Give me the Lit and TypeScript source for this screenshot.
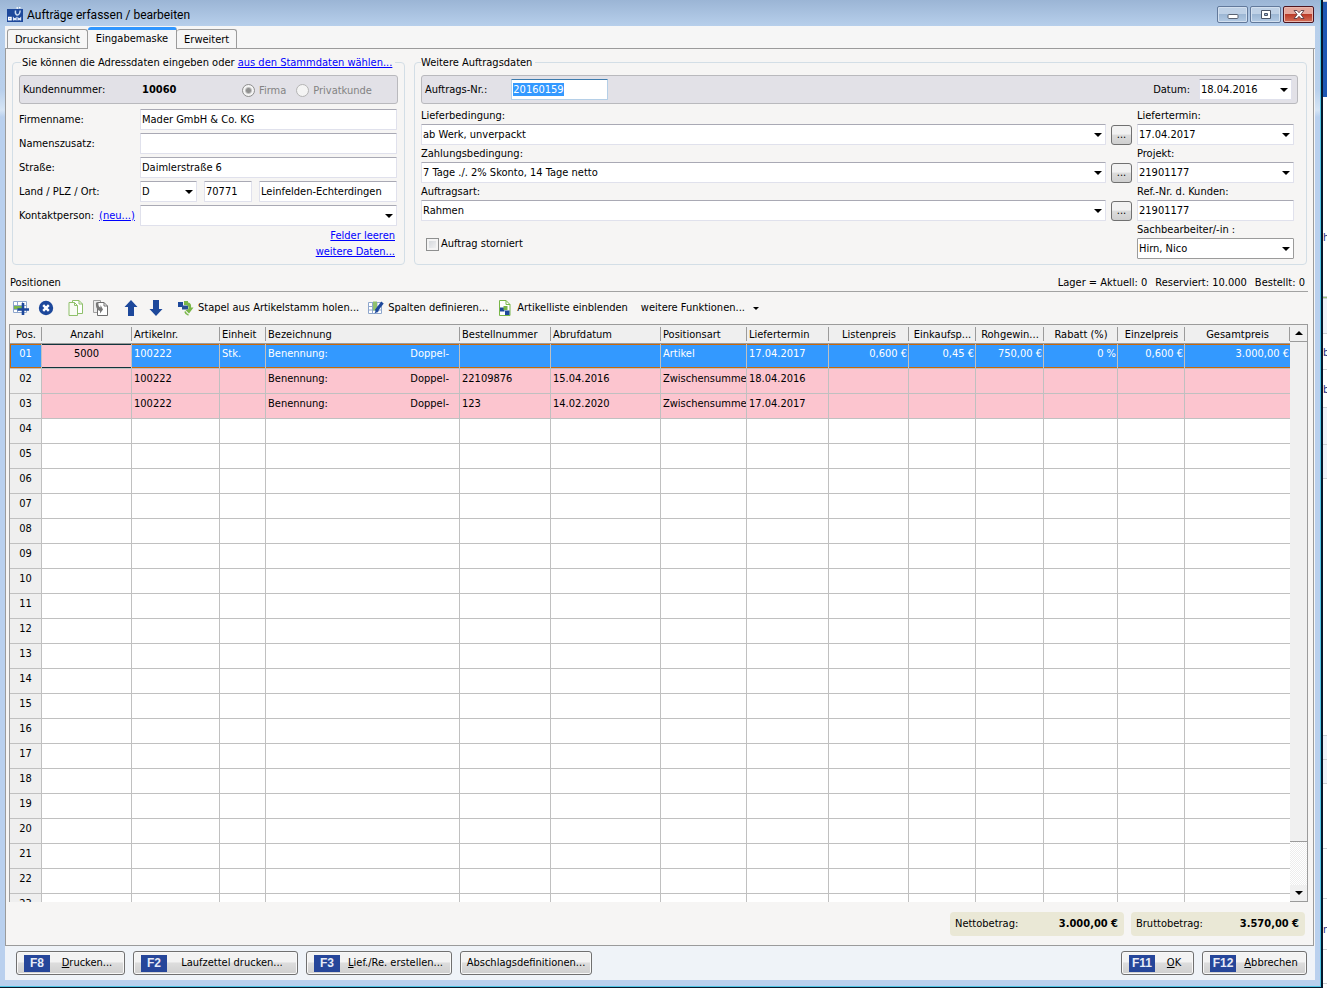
import { LitElement, html, css, svg, nothing, TemplateResult } from "lit";
import { customElement } from "lit/decorators.js";
import { classMap } from "lit/directives/class-map.js";
import { styleMap } from "lit/directives/style-map.js";

interface Column {
  title: string;
  width: number;
  align?: "center" | "right";
}

const COLUMNS: Column[] = [
  { title: "Pos.", width: 32, align: "center" },
  { title: "Anzahl", width: 90, align: "center" },
  { title: "Artikelnr.", width: 88 },
  { title: "Einheit", width: 46 },
  { title: "Bezeichnung", width: 194 },
  { title: "Bestellnummer", width: 91 },
  { title: "Abrufdatum", width: 110 },
  { title: "Positionsart", width: 86 },
  { title: "Liefertermin", width: 82 },
  { title: "Listenpreis", width: 80, align: "right" },
  { title: "Einkaufsp...", width: 67, align: "right" },
  { title: "Rohgewin...", width: 68, align: "right" },
  { title: "Rabatt (%)", width: 74, align: "right" },
  { title: "Einzelpreis", width: 67, align: "right" },
  { title: "Gesamtpreis", width: 106, align: "right" },
];

const ROWS: string[][] = [
  ["5000", "100222", "Stk.", "Benennung:|Doppel-", "", "", "Artikel", "17.04.2017", "0,600 €", "0,45 €", "750,00 €", "0 %", "0,600 €", "3.000,00 €"],
  ["", "100222", "", "Benennung:|Doppel-", "22109876", "15.04.2016", "Zwischensumme", "18.04.2016", "", "", "", "", "", ""],
  ["", "100222", "", "Benennung:|Doppel-", "123", "14.02.2020", "Zwischensumme", "17.04.2017", "", "", "", "", "", ""],
];

const ROW_COUNT = 23;

/* Slices of the application window that lies behind the dialog. */
const BEHIND: { height: number; tone: string; text?: string }[] = [
  { height: 2, tone: "pale" },
  { height: 95, tone: "blue" },
  { height: 134, tone: "white clear" },
  { height: 66, tone: "white", text: "h" },
  { height: 2, tone: "green" },
  { height: 35, tone: "pale" },
  { height: 12, tone: "white clear" },
  { height: 24, tone: "white", text: "b" },
  { height: 13, tone: "white clear" },
  { height: 25, tone: "white", text: "b" },
  { height: 37, tone: "pale" },
  { height: 34, tone: "pale" },
  { height: 257, tone: "white" },
  { height: 24, tone: "pale" },
  { height: 24, tone: "pale" },
  { height: 65, tone: "white" },
  { height: 50, tone: "white" },
  { height: 24, tone: "white clear" },
  { height: 27, tone: "white", text: "n" },
  { height: 34, tone: "white" },
];

const triangle = html`<svg class="triangle" width="8" height="4" viewBox="0 0 8 4" aria-hidden="true"><path d="M0 0h8L4 4z" fill="#000" /></svg>`;

const icon = (body: unknown, size = 16) =>
  html`<svg width=${size} height=${size} viewBox="0 0 16 16" aria-hidden="true">${body}</svg>`;

const appIcon = icon(svg`
  <rect y="2" width="16" height="13" fill="#1d489b" />
  <path d="M1.700 10.500h2.300v2.300h-2.300z" fill="none" stroke="#fff" stroke-width="1.500" />
  <path d="M6.500 13.500v-2.500l1.300 1.500 1.300-1.500v2.500M11 13.500v-2.500l1.300 1.500 1.300-1.500v2.500" fill="none" stroke="#dfe8f7" stroke-width="1.200" />
  <path d="M8.500 3.500c-.500 3 .500 4.500 2 4.500s2.300-1.500 2.700-4.500" fill="none" stroke="#cbdcf2" stroke-width="1.500" />
  <path d="M9.500 1h1.500M12 0.500h1.500" stroke="#fff" stroke-width="1.500" />`);

const addRowIcon = icon(svg`
  <path d="M.5 1.500h13v11H.5zM.5 5.500h13M.5 9.500h13M4.500 1.500v11M9.500 1.500v11" fill="#fff" stroke="#8ea6cc" />
  <path d="M1 6h8v3H1z" fill="#79b648" />
  <path d="M10 3v12M4.500 9.500h11.500" stroke="#1d489b" stroke-width="2.600" />`);
const deleteIcon = icon(svg`
  <circle cx="8" cy="8" r="7.200" fill="#1d489b" />
  <path d="M5.200 5.200l5.600 5.600M10.800 5.200l-5.600 5.600" stroke="#fff" stroke-width="2.400" />`);
const copyIcon = icon(svg`
  <path d="M4.500.5h6.500l3.500 3.500v9.500H4.500z" fill="#fff" stroke="#8fc06b" />
  <path d="M11 .5v3.500h3.500" fill="none" stroke="#8fc06b" />
  <path d="M1 2.500h5.500l3 3v10H1z" fill="#f8fbf5" stroke="#8fc06b" />
  <path d="M6.500 2.500v3h3" fill="none" stroke="#8fc06b" />`);
const pasteIcon = icon(svg`
  <path d="M.5.5h7v12h-7z" fill="#ececec" stroke="#a0a0a0" />
  <path d="M4.500 2.500h6.500l3.500 3.500v9.500h-10z" fill="#fff" stroke="#6e6e6e" />
  <path d="M11 2.500v3.500h3.500" fill="none" stroke="#6e6e6e" />
  <path d="M3 2.500h2.500c-.500 3 .500 4.500 2 5V5l2.500 4.500-3 4v-2.500C4 10 2.500 7 3 2.500z" fill="#777" />`);
const upIcon = icon(svg`<path d="M8 0l6.500 7H11v9H5V7H1.500z" fill="#1d489b" />`);
const downIcon = icon(svg`<path d="M8 16l6.500-7H11V0H5v9H1.500z" fill="#1d489b" />`);
const stackIcon = icon(svg`
  <path d="M0 2h5v5H0z" fill="#1d489b" /><path d="M6 1h4v4H6z" fill="#79b648" /><path d="M4 5.500h6v4H4z" fill="#274f92" />
  <path d="M9 2.500c3.500 0 4.500 2 4 5l2.500 0-4.500 6-3.500-3.500 2.500-.500c1-2 .500-3.500-1-4z" fill="#79b648" />
  <path d="M7 11.500c.500 2 1.500 3 3.500 3.500" fill="none" stroke="#79b648" stroke-width="1.600" />`);
const columnsIcon = icon(svg`
  <path d="M.5 2.500h13v11H.5zM.5 6.500h13M.5 10h13M4.500 2.500v11M9 2.500v11" fill="#fff" stroke="#8ea6cc" />
  <path d="M5 1.500h4v9H5z" fill="#8fc06b" />
  <path d="M14.500 2.500L8 11" stroke="#1d489b" stroke-width="3" />
  <path d="M8.500 8.500L6.500 13.500l4.500-2.500z" fill="#1d489b" />`);
const listIcon = icon(svg`
  <path d="M2.500.5h6.500l4 4v11H2.500z" fill="#fff" stroke="#79b648" />
  <path d="M9 .5v4h4" fill="none" stroke="#79b648" />
  <path d="M3 7.500h4.500v4H3zM8 10.500h4.500v4.500H8z" fill="#1d489b" /><path d="M6.500 6h4v4h-4z" fill="#79b648" />`);

@customElement("app-root")
export class AppRoot extends LitElement {
  static styles = css`
    :host {
      display: grid;
      grid-template-columns: minmax(0, 1fr) 4px;
      height: 100vh;
      overflow: hidden;
      background: #fff;
      color: #000;
      font: 11px/14px "DejaVu Sans Condensed", Tahoma, sans-serif;
    }
    *, *::before, *::after { box-sizing: border-box; }
    svg { display: block; flex: none; }
    a { color: #00f; text-decoration: underline; }
    button, input, select { font: inherit; color: inherit; margin: 0; }

    .window {
      display: flex;
      flex-direction: column;
      min-width: 0;
      min-height: 0;
      margin-bottom: 1px;
      padding: 0 6px 7px 5px;
      border: solid #06182c;
      border-width: 0 2px 1px 0;
      background: linear-gradient(#9bb5d5, #b7cfeb 26px, #b9d0ec 90px, #d6e5f5 110px, #b9d0ee 117px, #b9d0ee);
      box-shadow: inset -1px -1px #4ec4e4;
    }
    .titlebar {
      display: flex;
      align-items: center;
      gap: 4px;
      height: 26px;
      padding: 3px 1px 0 2px;
      font: 12px/16px Roboto, "Segoe UI", sans-serif;
    }
    .titlebar h1 { flex: 1; margin: 0; font: inherit; }
    .caption { display: flex; gap: 2px; }
    .caption button {
      display: grid;
      place-items: center;
      width: 31px;
      height: 17px;
      padding: 0;
      border: 1px solid #62799b;
      border-radius: 2px;
      background: linear-gradient(#bfd1e6 45%, #9db7d4 50%, #b3cae4);
      box-shadow: inset 0 0 0 1px #d3e0ef;
    }
    .caption .close {
      border-color: #4e1520;
      background: linear-gradient(#e5a79c 45%, #bb3b28 50%, #d4705a);
      box-shadow: inset 0 0 0 1px #eab8ae;
    }

    .client {
      flex: 1;
      display: flex;
      flex-direction: column;
      min-height: 0;
      background: #f6f6f6;
    }
    .tabs {
      display: flex;
      align-items: flex-end;
      height: 23px;
      padding: 0 2px;
      border-bottom: 1px solid #9b9b9b;
    }
    .tab {
      height: 19px;
      padding: 3px 7px 1px;
      border: 1px solid #9b9b9b;
      border-bottom: 0;
      border-radius: 3px 3px 0 0;
      background: #f6f6f6;
      white-space: nowrap;
    }
    .tab + .tab { border-left: 0; }
    .tab.active {
      height: 22px;
      margin-bottom: -1px;
      border-top: 3px solid #2f96ff;
      padding: 0 8px 2px;
    }
    .page {
      flex: 1;
      display: flex;
      flex-direction: column;
      min-height: 0;
      margin-right: 1px;
      padding: 6px 5px 0 3px;
      border: solid #9b9b9b;
      border-width: 0 1px 1px;
      background: #f6f5f4;
    }

    .forms {
      display: grid;
      grid-template-columns: 393px minmax(0, 1fr);
      gap: 9px;
      padding: 0 1px 0 3px;
    }
    fieldset {
      min-width: 0;
      margin: 0;
      padding: 0 6px;
      border: 1px solid #d3dee6;
      border-radius: 4px;
    }
    fieldset.right { padding-right: 8px; }
    legend { height: 14px; padding: 1px 3px 0 1px; white-space: nowrap; }
    .left legend { margin-left: 2px; }
    .right legend { padding-left: 0; }
    .band {
      display: flex;
      align-items: center;
      height: 29px;
      margin-top: 6px;
      padding: 0 5px 0 3px;
      border: 1px solid #b9b9bd;
      border-radius: 3px;
      background: #e2e1e7;
    }
    .number-label { width: 119px; }
    .band output { width: 100px; font-weight: bold; }
    .radio {
      display: flex;
      align-items: center;
      gap: 4px;
      margin-right: 10px;
      padding-top: 2px;
      color: #838383;
    }
    input[type="radio"] {
      appearance: none;
      width: 13px;
      height: 13px;
      border: 1px solid #b4b4b4;
      border-radius: 50%;
      background: #f4f4f4;
    }
    input[type="radio"]:checked {
      border-color: #8e8e8e;
      background: radial-gradient(circle, #909090 2px, #f4f4f4 4px);
    }

    input[type="text"], select {
      appearance: none;
      width: 100%;
      min-width: 0;
      height: 21px;
      padding: 0 1px;
      border: 1px solid #e0e1ec;
      border-top-color: #a9a9b4;
      border-radius: 1px;
      background: #fff;
      outline: none;
    }
    .combo { display: grid; align-items: center; }
    .combo > * { grid-area: 1 / 1; }
    .combo .triangle { justify-self: end; margin-right: 4px; pointer-events: none; }
    .combo.classic select { border-color: #9b9b9b; }

    .address { display: grid; gap: 3px; padding: 5px 1px 0 0; }
    .field {
      display: grid;
      grid-template-columns: 121px minmax(0, 1fr);
      align-items: center;
    }
    .place { display: grid; grid-template-columns: 57px 48px minmax(0, 1fr); gap: 7px; }
    .contact { display: flex; gap: 5px; white-space: nowrap; }
    .more {
      display: grid;
      justify-items: end;
      gap: 2px;
      padding: 3px 3px 5px 0;
    }

    .order { width: 97px; margin-left: 24px; }
    input.order-no { border-color: #b5cfe7; border-top-color: #3d7bad; }
    .order-no::selection { background: #39f; color: #fff; }
    .date { display: flex; align-items: center; gap: 9px; margin-left: auto; }
    .date .combo { width: 93px; }
    .details {
      display: grid;
      grid-template-columns: minmax(0, 1fr) 21px 157px;
      column-gap: 5px;
      row-gap: 2px;
      padding: 5px 4px 0 0;
    }
    .stack { display: grid; grid-template-rows: 15px 21px; }
    .details .browse {
      align-self: end;
      height: 20px;
      padding: 0;
      border: 1px solid #707070;
      border-radius: 3px;
      background: linear-gradient(#f2f2f2 45%, #dcdcdc 50%, #cfcfcf);
    }
    .cancelled {
      display: flex;
      align-items: center;
      gap: 2px;
      grid-column: 1 / 3;
      padding: 6px 0 0 5px;
    }
    input[type="checkbox"] {
      appearance: none;
      width: 13px;
      height: 13px;
      border: 1px solid #8e8f8f;
      background: linear-gradient(135deg, #cfd3d8, #f6f6f6);
      box-shadow: inset 0 0 0 2px #f4f4f4;
    }

    .positions-head {
      display: flex;
      justify-content: space-between;
      height: 17px;
      margin: 10px 0 0 1px;
      padding: 1px 3px 0 0;
      border-bottom: 1px solid #a2a2a2;
    }
    .positions-head h2 { margin: 0; font: inherit; }
    .stock { display: flex; gap: 8px; }
    .toolbar {
      display: flex;
      align-items: center;
      height: 32px;
      padding-left: 4px;
    }
    .toolbar button {
      display: flex;
      align-items: center;
      gap: 4px;
      padding: 0;
      border: 0;
      background: none;
      white-space: nowrap;
    }
    .tool-pair { display: flex; gap: 9px; margin-right: 14px; }
    .tool-texts { display: flex; gap: 9px; }
    .toolbar .menu { gap: 8px; margin-left: 4px; }

    .grid {
      flex: 1;
      display: grid;
      grid-template-columns: minmax(0, 1fr) 17px;
      min-height: 0;
      overflow: hidden;
      border: solid #9b9b9b;
      border-width: 1px 1px 0;
      background: #fff;
    }
    .viewport { overflow: hidden; min-height: 0; }
    table {
      width: 100%;
      table-layout: fixed;
      border-collapse: separate;
      border-spacing: 0;
    }
    th, td {
      overflow: hidden;
      padding: 3px 0 0 2px;
      text-align: left;
      vertical-align: top;
      white-space: nowrap;
      font-weight: normal;
    }
    thead th {
      height: 19px;
      border-bottom: 1px solid #9b9b9b;
      background: linear-gradient(#9b9b9b, #9b9b9b) right 2px / 1px 14px no-repeat #efefef;
    }
    thead th:last-child { border-right: 1px solid #9b9b9b; }
    td, tbody th {
      height: 25px;
      border: solid #c0c0c0;
      border-width: 0 1px 1px 0;
    }
    tbody th { background: #efefef; }
    .center, th.right { padding-left: 0; text-align: center; }
    td.right { padding-right: 1px; text-align: right; }
    .filled td { background: #fcc5cf; }
    .selected td, .selected th {
      background: #39f;
      color: #fff;
      box-shadow: inset 0 1px #c8680a, inset 0 -1px #c8680a;
    }
    .selected th { box-shadow: inset 1px 1px #c8680a, inset 0 -1px #c8680a; }
    .selected td:last-child { border-right-color: #c8680a; }
    .selected td.edit {
      background: #fcc5cf;
      color: #000;
      box-shadow: inset 0 1px #12343c, inset 0 -1px #12343c;
    }
    .description { display: flex; justify-content: space-between; padding-right: 10px; }

    .scrollbar {
      display: grid;
      grid-template-rows: 17px minmax(0, 1fr) 17px;
      min-height: 0;
      background: repeating-conic-gradient(#fff 0 25%, #ededed 0 50%) 0 0 / 2px 2px;
    }
    .scrollbar button {
      display: grid;
      place-items: center;
      padding: 0;
      border: solid #9b9b9b;
      border-width: 0 0 1px;
      background: #f0f0f0;
    }
    .thumb { height: 92%; border-bottom: 1px solid #9b9b9b; background: #f0f0f0; }
    .flip { transform: rotate(180deg); }

    .totals {
      display: flex;
      justify-content: flex-end;
      gap: 7px;
      padding: 10px 3px 9px;
    }
    .total {
      display: flex;
      justify-content: space-between;
      width: 174px;
      padding: 5px 6px 5px 5px;
      border-radius: 4px;
      background: #eae8d6;
    }

    .actions {
      display: flex;
      gap: 8px;
      padding: 5px 8px 5px 11px;
      background: #eff3f8;
    }
    .actions button {
      display: flex;
      align-items: center;
      height: 24px;
      padding: 0 0 0 7px;
      border: 1px solid #707070;
      border-radius: 3px;
      background: linear-gradient(#f3f3f3 45%, #dddddd 50%, #cfcfcf);
      box-shadow: inset 0 0 0 1px #f8f8f8;
      white-space: nowrap;
    }
    .actions .plain { padding: 0; }
    .key {
      width: 26px;
      height: 17px;
      background: #26469a;
      color: #e6ebf7;
      font: bold 12px/17px "Liberation Sans", Arial, sans-serif;
      text-align: center;
    }
    .caption-text { flex: 1; text-align: center; }
    .spacer { flex: 1; }

    .behind { overflow: hidden; }
    .slice { overflow: hidden; border-bottom: 1px solid #cdd0d4; line-height: 14px; color: #1c2a78; }
    .white { background: #fff; }
    .pale { background: #eff3fa; }
    .blue { background: #1e58b4; border-bottom-color: #1e58b4; }
    .green { background: #9dc277; }
    .clear { border-bottom-color: transparent; }
  `;

  firstUpdated() {
    const order = this.renderRoot.querySelector<HTMLInputElement>("#order-no");
    order?.focus();
    order?.select();
  }

  private combo(id: string, value: string, classic = false): TemplateResult {
    return html`<div class=${classMap({ combo: true, classic })}>
      <select id=${id}><option>${value}</option></select>${triangle}
    </div>`;
  }

  private stack(id: string, label: string, control: TemplateResult) {
    return html`<div class="stack"><label for=${id}>${label}</label>${control}</div>`;
  }

  private browse(label: string) {
    return html`<button class="browse" aria-label=${label}>...</button>`;
  }

  private action(key: string, width: number, text: TemplateResult | string) {
    return html`<button class=${key ? "" : "plain"} style=${styleMap({ width: `${width}px` })}>
      ${key ? html`<span class="key">${key}</span>` : nothing}<span class="caption-text">${text}</span>
    </button>`;
  }

  private renderAddress() {
    return html`<fieldset class="left">
      <legend>Sie können die Adressdaten eingeben oder <a href="#stamm">aus den Stammdaten wählen...</a></legend>
      <div class="band">
        <span class="number-label">Kundennummer:</span><output>10060</output>
        <label class="radio"><input type="radio" name="kind" checked disabled />Firma</label>
        <label class="radio"><input type="radio" name="kind" disabled />Privatkunde</label>
      </div>
      <div class="address">
        <div class="field"><label for="company">Firmenname:</label><input id="company" type="text" value="Mader GmbH &amp; Co. KG" /></div>
        <div class="field"><label for="suffix">Namenszusatz:</label><input id="suffix" type="text" /></div>
        <div class="field"><label for="street">Straße:</label><input id="street" type="text" value="Daimlerstraße 6" /></div>
        <div class="field">
          <label for="country">Land / PLZ / Ort:</label>
          <div class="place">
            ${this.combo("country", "D")}
            <input type="text" aria-label="PLZ" value="70771" />
            <input type="text" aria-label="Ort" value="Leinfelden-Echterdingen" />
          </div>
        </div>
        <div class="field">
          <div class="contact"><label for="contact">Kontaktperson:</label><a href="#neu">(neu...)</a></div>
          ${this.combo("contact", "")}
        </div>
      </div>
      <div class="more"><a href="#leeren">Felder leeren</a><a href="#weitere">weitere Daten...</a></div>
    </fieldset>`;
  }

  private renderOrder() {
    return html`<fieldset class="right">
      <legend>Weitere Auftragsdaten</legend>
      <div class="band">
        <label for="order-no">Auftrags-Nr.:</label>
        <div class="order"><input id="order-no" class="order-no" type="text" value="20160159" /></div>
        <div class="date"><label for="date">Datum:</label>${this.combo("date", "18.04.2016")}</div>
      </div>
      <div class="details">
        ${this.stack("delivery", "Lieferbedingung:", this.combo("delivery", "ab Werk, unverpackt"))}
        ${this.browse("Lieferbedingung wählen")}
        ${this.stack("due", "Liefertermin:", this.combo("due", "17.04.2017"))}
        ${this.stack("payment", "Zahlungsbedingung:", this.combo("payment", "7 Tage ./. 2% Skonto, 14 Tage netto"))}
        ${this.browse("Zahlungsbedingung wählen")}
        ${this.stack("project", "Projekt:", this.combo("project", "21901177"))}
        ${this.stack("kind", "Auftragsart:", this.combo("kind", "Rahmen"))}
        ${this.browse("Auftragsart wählen")}
        ${this.stack("ref", "Ref.-Nr. d. Kunden:", html`<input id="ref" type="text" value="21901177" />`)}
        <label class="cancelled"><input type="checkbox" />Auftrag storniert</label>
        ${this.stack("clerk", "Sachbearbeiter/-in :", this.combo("clerk", "Hirn, Nico", true))}
      </div>
    </fieldset>`;
  }

  private renderRow(index: number) {
    const cells = ROWS[index] ?? Array<string>(COLUMNS.length - 1).fill("");
    const classes = classMap({ filled: index < ROWS.length, selected: index === 0 });
    return html`<tr class=${classes}>
      <th class="center" scope="row">${String(index + 1).padStart(2, "0")}</th>
      ${cells.map((text, i) => {
        const [name, detail] = text.split("|");
        const cls = `${COLUMNS[i + 1].align ?? ""}${i === 0 ? " edit" : ""}`;
        return html`<td class=${cls}>${detail ? html`<div class="description"><span>${name}</span><span>${detail}</span></div>` : text}</td>`;
      })}
    </tr>`;
  }

  private renderGrid() {
    return html`<div class="grid">
      <div class="viewport">
        <table aria-label="Positionen">
          <colgroup>${COLUMNS.map((c) => html`<col style=${styleMap({ width: `${c.width}px` })} />`)}</colgroup>
          <thead><tr>${COLUMNS.map((c) => html`<th class=${c.align ?? ""} scope="col">${c.title}</th>`)}</tr></thead>
          <tbody>${Array.from({ length: ROW_COUNT }, (_, i) => this.renderRow(i))}</tbody>
        </table>
      </div>
      <div class="scrollbar">
        <button aria-label="Nach oben"><span class="flip">${triangle}</span></button>
        <div class="thumb"></div>
        <button aria-label="Nach unten">${triangle}</button>
      </div>
    </div>`;
  }

  render() {
    return html`
      <main class="window">
        <header class="titlebar">
          ${appIcon}
          <h1>Aufträge erfassen / bearbeiten</h1>
          <div class="caption">
            <button aria-label="Minimieren"><svg width="12" height="9" viewBox="0 0 12 9"><rect x="1" y="4.500" width="10" height="4" rx="1" fill="#fff" stroke="#5a6372" /></svg></button>
            <button aria-label="Maximieren"><svg width="12" height="9" viewBox="0 0 12 9"><path d="M1.500.5h9v8h-9zM4.500 3.500h3v2h-3z" fill="#fff" fill-rule="evenodd" stroke="#4a5568" /></svg></button>
            <button class="close" aria-label="Schließen"><svg width="12" height="9" viewBox="0 0 12 9"><path d="M1 .5h3L6 2.700 8 .5h3L7.900 4.500 11 8.500H8L6 6.300 4 8.500H1l3.100-4z" fill="#fff" stroke="#5b3a42" stroke-width=".9" /></svg></button>
          </div>
        </header>
        <div class="client">
          <nav class="tabs" role="tablist">
            <button class="tab" role="tab">Druckansicht</button>
            <button class="tab active" role="tab" aria-selected="true">Eingabemaske</button>
            <button class="tab" role="tab">Erweitert</button>
          </nav>
          <section class="page">
            <div class="forms">${this.renderAddress()}${this.renderOrder()}</div>
            <div class="positions-head">
              <h2>Positionen</h2>
              <div class="stock"><span>Lager = Aktuell: 0</span><span>Reserviert: 10.000</span><span>Bestellt: 0</span></div>
            </div>
            <div class="toolbar">
              <div class="tool-pair"><button aria-label="Position einfügen">${addRowIcon}</button><button aria-label="Position löschen">${deleteIcon}</button></div>
              <div class="tool-pair"><button aria-label="Kopieren">${copyIcon}</button><button aria-label="Einfügen">${pasteIcon}</button></div>
              <div class="tool-pair"><button aria-label="Nach oben verschieben">${upIcon}</button><button aria-label="Nach unten verschieben">${downIcon}</button></div>
              <div class="tool-texts">
                <button>${stackIcon}Stapel aus Artikelstamm holen...</button>
                <button>${columnsIcon}Spalten definieren...</button>
                <button>${listIcon}Artikelliste einblenden</button>
                <button class="menu">weitere Funktionen...<svg width="6" height="3" viewBox="0 0 6 3"><path d="M0 0h6L3 3z" /></svg></button>
              </div>
            </div>
            ${this.renderGrid()}
            <div class="totals">
              <div class="total"><span>Nettobetrag:</span><strong>3.000,00 €</strong></div>
              <div class="total"><span>Bruttobetrag:</span><strong>3.570,00 €</strong></div>
            </div>
          </section>
          <footer class="actions">
            ${this.action("F8", 109, html`<u>D</u>rucken...`)}
            ${this.action("F2", 165, "Laufzettel drucken...")}
            ${this.action("F3", 146, html`<u>L</u>ief./Re. erstellen...`)}
            ${this.action("", 132, "Abschlagsdefinitionen...")}
            <span class="spacer"></span>
            ${this.action("F11", 73, html`<u>O</u>K`)}
            ${this.action("F12", 105, html`<u>A</u>bbrechen`)}
          </footer>
        </div>
      </main>
      <div class="behind" aria-hidden="true">
        ${BEHIND.map((s) => html`<div class="slice ${s.tone}" style=${styleMap({ height: `${s.height}px` })}>${s.text ?? nothing}</div>`)}
      </div>
    `;
  }
}
